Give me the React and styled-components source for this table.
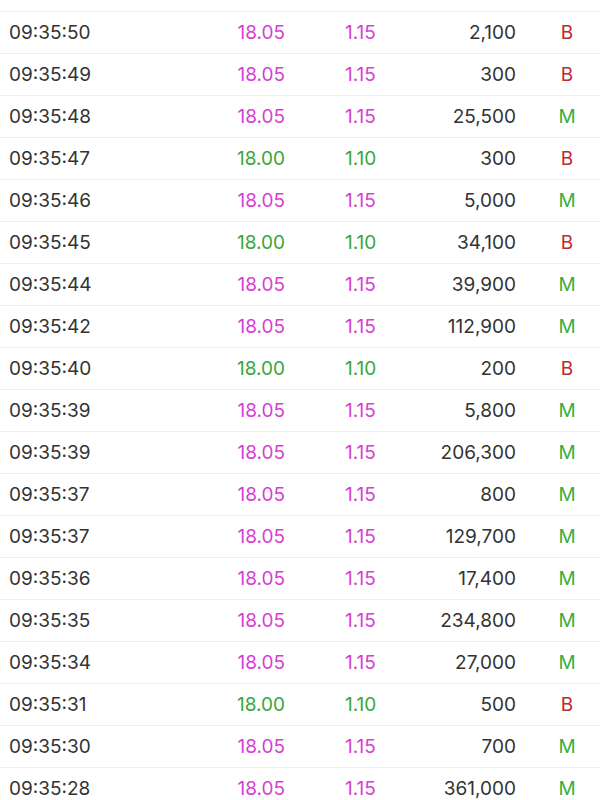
import React from "react"
import styled, { createGlobalStyle } from "styled-components"

const GlobalStyle = createGlobalStyle`
  html, body {
    margin: 0;
    padding: 0;
    background: #ffffff;
  }
  body {
    font-family: Inter, "Liberation Sans", sans-serif;
  }
`

const List = styled.div`
  width: 600px;
  padding-top: 11px;
`

const Row = styled.div`
  display: grid;
  grid-template-columns: 196px 80px 135px 96px 1fr;
  align-items: center;
  height: 41px;
  padding-left: 9px;
  border-top: 1px solid #efefef;
  font-size: 19px;
  color: #333333;
`

const Time = styled.div`
  text-align: left;
`

const Price = styled.div`
  text-align: right;
  color: ${p => (p.$up ? "#d63fd4" : "#38a73a")};
`

const Change = styled.div`
  padding-left: 60px;
  color: ${p => (p.$up ? "#d63fd4" : "#38a73a")};
`

const Volume = styled.div`
  text-align: right;
`

const Side = styled.div`
  padding-left: 18px;
  text-align: center;
  color: ${p => (p.$side === "B" ? "#bd2a32" : "#3aae3c")};
`

const rows = [
  ["09:35:50", 1, "2,100", "B"],
  ["09:35:49", 1, "300", "B"],
  ["09:35:48", 1, "25,500", "M"],
  ["09:35:47", 0, "300", "B"],
  ["09:35:46", 1, "5,000", "M"],
  ["09:35:45", 0, "34,100", "B"],
  ["09:35:44", 1, "39,900", "M"],
  ["09:35:42", 1, "112,900", "M"],
  ["09:35:40", 0, "200", "B"],
  ["09:35:39", 1, "5,800", "M"],
  ["09:35:39", 1, "206,300", "M"],
  ["09:35:37", 1, "800", "M"],
  ["09:35:37", 1, "129,700", "M"],
  ["09:35:36", 1, "17,400", "M"],
  ["09:35:35", 1, "234,800", "M"],
  ["09:35:34", 1, "27,000", "M"],
  ["09:35:31", 0, "500", "B"],
  ["09:35:30", 1, "700", "M"],
  ["09:35:28", 1, "361,000", "M"],
]

const App = () => (
  <>
    <GlobalStyle />
    <List>
      {rows.map(([time, up, vol, side], i) => (
        <Row key={i}>
          <Time>{time}</Time>
          <Price $up={up}>{up ? "18.05" : "18.00"}</Price>
          <Change $up={up}>{up ? "1.15" : "1.10"}</Change>
          <Volume>{vol}</Volume>
          <Side $side={side}>{side}</Side>
        </Row>
      ))}
    </List>
  </>
)

export default App
